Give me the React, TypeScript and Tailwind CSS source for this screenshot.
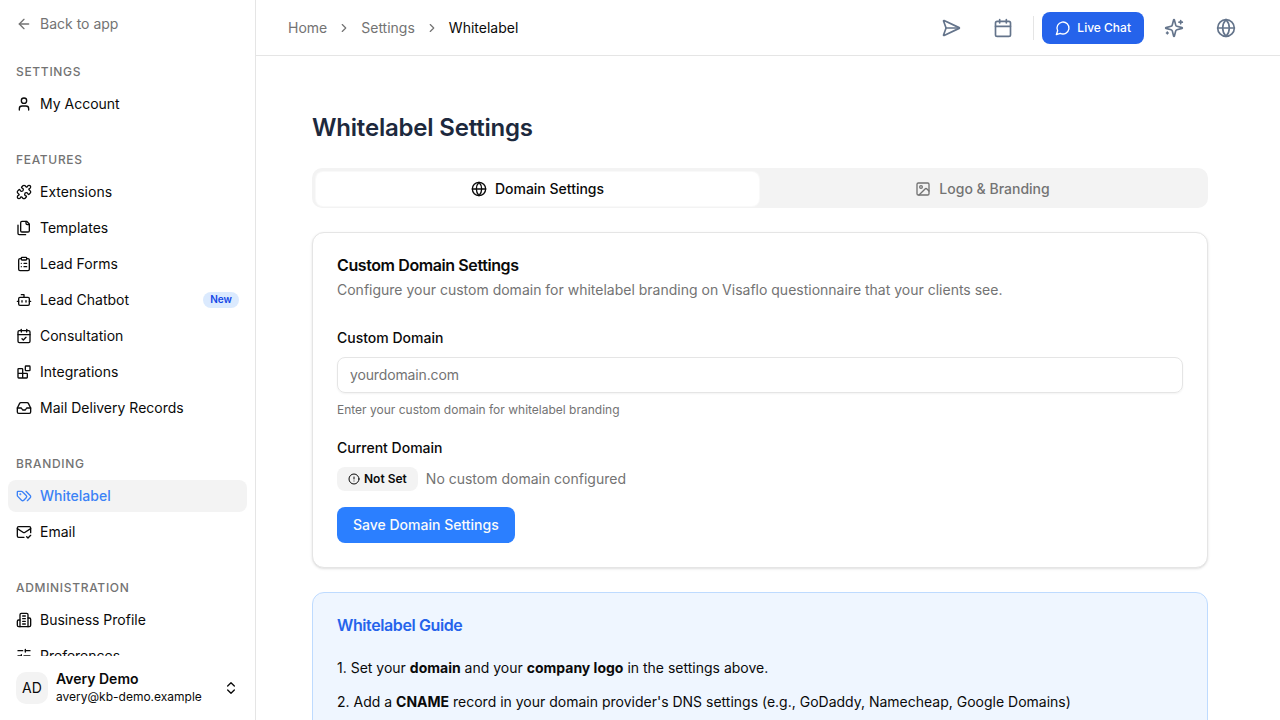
import {
  ArrowLeft,
  Bot,
  Calendar,
  CalendarCheck,
  ChevronRight,
  ChevronsUpDown,
  CircleAlert,
  ClipboardList,
  Globe,
  Image,
  Inbox,
  MailCheck,
  Puzzle,
  SendHorizontal,
  User,
} from "lucide-react";
import clsx from "clsx";
import type { ComponentType, ReactNode } from "react";

type IconProps = { className?: string };

const Svg = ({
  className,
  children,
}: {
  className?: string;
  children: ReactNode;
}) => (
  <svg
    viewBox="0 0 24 24"
    fill="none"
    stroke="currentColor"
    strokeWidth={2}
    strokeLinecap="round"
    strokeLinejoin="round"
    className={className}
  >
    {children}
  </svg>
);

const Files = ({ className }: IconProps) => (
  <Svg className={className}>
    <path d="M20 7h-3a2 2 0 0 1-2-2V2" />
    <path d="M9 18a2 2 0 0 1-2-2V4a2 2 0 0 1 2-2h7l4 4v10a2 2 0 0 1-2 2Z" />
    <path d="M3 7.6v12.8A1.6 1.6 0 0 0 4.6 22h9.8" />
  </Svg>
);

const Blocks = ({ className }: IconProps) => (
  <Svg className={className}>
    <rect width="7" height="7" x="14" y="3" rx="1" />
    <path d="M10 21V8a1 1 0 0 0-1-1H4a1 1 0 0 0-1 1v12a1 1 0 0 0 1 1h12a1 1 0 0 0 1-1v-5a1 1 0 0 0-1-1H3" />
  </Svg>
);

const Tags = ({ className }: IconProps) => (
  <Svg className={className}>
    <path d="m15 5 6.3 6.3a2.4 2.4 0 0 1 0 3.4L17 19" />
    <path d="M9.586 5.586A2 2 0 0 0 8.172 5H3a1 1 0 0 0-1 1v5.172a2 2 0 0 0 .586 1.414L8.29 18.29a2.426 2.426 0 0 0 3.42 0l3.58-3.58a2.426 2.426 0 0 0 0-3.42z" />
    <circle cx="6.5" cy="9.5" r=".5" fill="currentColor" />
  </Svg>
);

const Building = ({ className }: IconProps) => (
  <Svg className={className}>
    <path d="M6 22V4a2 2 0 0 1 2-2h8a2 2 0 0 1 2 2v18Z" />
    <path d="M6 12H4a2 2 0 0 0-2 2v6a2 2 0 0 0 2 2h2" />
    <path d="M18 9h2a2 2 0 0 1 2 2v9a2 2 0 0 1-2 2h-2" />
    <path d="M10 6h4M10 10h4M10 14h4M10 18h4" />
  </Svg>
);

const Sliders = ({ className }: IconProps) => (
  <Svg className={className}>
    <path d="M21 4h-7M10 4H3M21 12h-9M8 12H3M21 20h-5M12 20H3" />
    <path d="M14 2v4M8 10v4M16 18v4" />
  </Svg>
);

const MessageCircle = ({ className }: IconProps) => (
  <Svg className={className}>
    <path d="M7.9 20A9 9 0 1 0 4 16.1L2 22Z" />
  </Svg>
);

const Sparkles = ({ className }: IconProps) => (
  <Svg className={className}>
    <path d="M9.937 15.5A2 2 0 0 0 8.5 14.063l-6.135-1.582a.5.5 0 0 1 0-.962L8.5 9.936A2 2 0 0 0 9.937 8.5l1.582-6.135a.5.5 0 0 1 .963 0L14.063 8.5A2 2 0 0 0 15.5 9.937l6.135 1.581a.5.5 0 0 1 0 .964L15.5 14.063a2 2 0 0 0-1.437 1.437l-1.582 6.135a.5.5 0 0 1-.963 0z" />
    <path d="M20 3v4M22 5h-4M4 17v2M5 18H3" />
  </Svg>
);

type NavItem = {
  label: string;
  icon: ComponentType<IconProps>;
  badge?: string;
  active?: boolean;
};

const groups: { title: string; items: NavItem[] }[] = [
  { title: "Settings", items: [{ label: "My Account", icon: User }] },
  {
    title: "Features",
    items: [
      { label: "Extensions", icon: Puzzle },
      { label: "Templates", icon: Files },
      { label: "Lead Forms", icon: ClipboardList },
      { label: "Lead Chatbot", icon: Bot, badge: "New" },
      { label: "Consultation", icon: CalendarCheck },
      { label: "Integrations", icon: Blocks },
      { label: "Mail Delivery Records", icon: Inbox },
    ],
  },
  {
    title: "Branding",
    items: [
      { label: "Whitelabel", icon: Tags, active: true },
      { label: "Email", icon: MailCheck },
    ],
  },
  {
    title: "Administration",
    items: [
      { label: "Business Profile", icon: Building },
      { label: "Preferences", icon: Sliders },
    ],
  },
];

const Sidebar = () => {
  return (
    <aside className="flex w-64 shrink-0 flex-col border-r border-neutral-200 bg-white">
      <a className="flex h-12 shrink-0 items-center gap-2 px-4 text-sm text-neutral-500">
        <ArrowLeft className="size-4" />
        Back to app
      </a>
      <nav className="flex min-h-0 flex-1 flex-col gap-2 overflow-hidden">
        {groups.map((group) => (
          <div key={group.title} className="shrink-0 p-2">
            <h3 className="flex h-8 items-center px-2 text-xs font-medium tracking-[0.68px] text-neutral-500 uppercase">
              {group.title}
            </h3>
            <ul className="flex flex-col gap-1">
              {group.items.map(({ label, icon: Icon, badge, active }) => (
                <li
                  key={label}
                  className={clsx(
                    "flex h-8 items-center gap-2 rounded-lg px-2 text-sm",
                    active
                      ? "bg-[#f3f3f3] font-medium text-[#3b82f6]"
                      : "text-neutral-950"
                  )}
                >
                  <Icon className="size-4 shrink-0" />
                  <span>{label}</span>
                  {badge && (
                    <span className="ml-auto flex h-4 items-center rounded-full bg-blue-100 px-[7px] pb-px text-[10px] font-semibold text-blue-700">
                      {badge}
                    </span>
                  )}
                </li>
              ))}
            </ul>
          </div>
        ))}
      </nav>
      <div className="flex h-16 shrink-0 items-center gap-2 px-4">
        <div className="flex size-8 items-center justify-center rounded-[10px] bg-[#f3f3f3] text-sm">
          AD
        </div>
        <div className="flex-1 pb-0.5">
          <p className="text-sm leading-[18px] font-semibold">Avery Demo</p>
          <p className="text-xs leading-[17px]">avery@kb-demo.example</p>
        </div>
        <ChevronsUpDown className="size-4" />
      </div>
    </aside>
  );
};

const Header = () => {
  return (
    <header className="flex h-14 shrink-0 items-center justify-between border-b border-neutral-200 px-8">
      <div className="flex items-center gap-2.5 text-sm text-neutral-500">
        <span>Home</span>
        <ChevronRight className="size-3.5" />
        <span>Settings</span>
        <ChevronRight className="size-3.5" />
        <span className="text-neutral-950">Whitelabel</span>
      </div>
      <div className="flex items-center text-[#64748b]">
        <button className="mr-3 flex size-10 items-center justify-center">
          <SendHorizontal className="size-5" />
        </button>
        <button className="flex size-10 items-center justify-center">
          <Calendar className="size-5" />
        </button>
        <div className="mr-2 ml-2.5 h-6 w-px bg-neutral-200" />
        <button className="mr-2.5 flex h-8 items-center gap-1.5 rounded-lg bg-[#2563eb] px-[13px] text-xs font-medium text-white">
          <MessageCircle className="size-4" />
          Live Chat
        </button>
        <button className="mr-3 flex size-10 items-center justify-center">
          <Sparkles className="size-5" />
        </button>
        <button className="mr-0.5 flex size-10 items-center justify-center">
          <Globe className="size-5" />
        </button>
      </div>
    </header>
  );
};

const Tabs = () => {
  return (
    <div className="mt-6 grid h-10 grid-cols-2 rounded-[10px] bg-[#f3f3f3] px-[3px] pt-[3px] pb-px text-sm font-medium">
      <button className="flex items-center justify-center gap-2 rounded-lg border border-[#f3f3f3]/50 bg-white">
        <Globe className="size-4" />
        Domain Settings
      </button>
      <button className="flex items-center justify-center gap-2 text-neutral-500">
        <Image className="size-4" />
        Logo &amp; Branding
      </button>
    </div>
  );
};

const DomainCard = () => {
  return (
    <section className="mt-6 h-[336px] rounded-xl border border-neutral-200 bg-white p-6 shadow-sm">
      <h2 className="leading-4 font-semibold tracking-tight">
        Custom Domain Settings
      </h2>
      <p className="mt-[7px] text-sm text-neutral-500">
        Configure your custom domain for whitelabel branding on Visaflo
        questionnaire that your clients see.
      </p>
      <label className="mt-[31px] block text-sm leading-[14px] font-medium">
        Custom Domain
      </label>
      <input
        className="mt-3 block h-9 w-full rounded-lg border border-neutral-200 px-3 pb-px text-sm tracking-[-0.14px] shadow-xs placeholder:text-neutral-500"
        placeholder="yourdomain.com"
      />
      <p className="mt-[9px] text-xs text-neutral-500">
        Enter your custom domain for whitelabel branding
      </p>
      <p className="mt-[23px] text-sm leading-[14px] font-medium">
        Current Domain
      </p>
      <div className="mt-3 flex items-center gap-2">
        <span className="flex h-6 items-center gap-1 rounded-lg bg-[#f3f3f3] px-[11px] text-xs font-semibold">
          <CircleAlert className="size-3" />
          Not Set
        </span>
        <span className="text-sm text-neutral-500">
          No custom domain configured
        </span>
      </div>
      <button className="mt-4 h-9 rounded-lg bg-[#2b7fff] px-4 text-sm font-medium text-neutral-50">
        Save Domain Settings
      </button>
    </section>
  );
};

const Guide = () => {
  return (
    <section className="mt-6 rounded-xl border border-blue-200 bg-blue-50 p-6">
      <h2 className="leading-4 font-semibold tracking-tight text-[#2563eb]">
        Whitelabel Guide
      </h2>
      <ol className="mt-6 flex flex-col gap-3 text-sm leading-[22px]">
        <li>
          1. Set your <strong>domain</strong> and your{" "}
          <strong>company logo</strong> in the settings above.
        </li>
        <li>
          2. Add a <strong>CNAME</strong> record in your domain provider's DNS
          settings (e.g., GoDaddy, Namecheap, Google Domains)
        </li>
      </ol>
    </section>
  );
};

const App = () => {
  return (
    <div className="flex h-screen overflow-hidden bg-white font-[Inter,sans-serif] text-neutral-950">
      <Sidebar />
      <div className="flex min-w-0 flex-1 flex-col">
        <Header />
        <main className="min-h-0 flex-1 overflow-hidden px-14 pt-14">
          <div className="w-4xl">
            <h1 className="text-2xl font-semibold tracking-[-0.2px] text-slate-800">
              Whitelabel Settings
            </h1>
            <Tabs />
            <DomainCard />
            <Guide />
          </div>
        </main>
      </div>
    </div>
  );
};

export default App;
